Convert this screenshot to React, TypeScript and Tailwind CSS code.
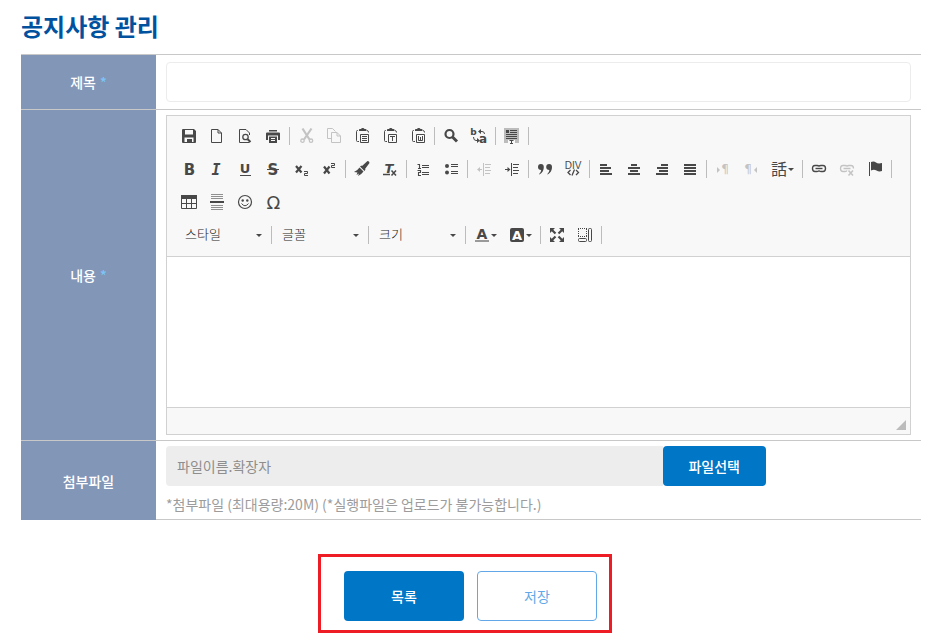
import { ReactNode } from "react";

const DARK = "#484848";
const MUTED = "#c3c3c3";
const SANS = "'DejaVu Sans', 'Noto Sans', sans-serif";

function Icon({ children, muted = false }: { children: ReactNode; muted?: boolean }) {
  const color = muted ? MUTED : DARK;
  return (
    <svg className="size-4 shrink-0 overflow-visible" viewBox="0 0 16 16" fill="none" stroke={color} color={color} aria-hidden="true">
      {children}
    </svg>
  );
}

type LetterProps = { x: number; y: number; size: number; text: string; bold?: boolean; italic?: boolean; family?: string; fill?: string };

function Letter({ x, y, size, text, bold = true, italic = false, family = SANS, fill = "currentColor" }: LetterProps) {
  return (
    <text
      x={x}
      y={y}
      fontSize={size}
      fontWeight={bold ? 700 : 400}
      fontStyle={italic ? "italic" : "normal"}
      fontFamily={family}
      textAnchor="middle"
      fill={fill}
      stroke="none"
    >
      {text}
    </text>
  );
}

function Caret() {
  return (
    <svg className="h-[3px] w-1.5 shrink-0" viewBox="0 0 6 3" aria-hidden="true">
      <path d="M0 0h6L3 3z" fill={DARK} />
    </svg>
  );
}

const clipboard = (
  <>
    <path d="M4 2.500H3.500Q2.500 2.500 2.500 3.500V12.500Q2.500 13.500 3.500 13.500H5M13 2.500Q14.500 2.500 14.500 4.500" />
    <path d="M5 3V1.500Q5 1 6 1H7Q7.500 0 8.500 0H9Q10 0 10.500 1H11.500Q12.500 1 12.500 1.500V3z" fill="currentColor" stroke="none" />
    <path d="M6.500 6.500H14.500V14.500H6.500z" />
  </>
);

const page = <path d="M2.500 1.500H9L12.500 5V14.500H2.500zM9 1.500V5H12.500" />;

const icons: Record<string, ReactNode> = {
  save: (
    <Icon>
      <path d="M2 1H13L15 3V14Q15 15 14 15H2Q1 15 1 14V2Q1 1 2 1zM4 2V6.500H12V2zM3.500 9.500V14H6V11H11V14H12.500V9.500z" fill="currentColor" fillRule="evenodd" stroke="none" />
      <path d="M7 12H8.500V14H7z" fill="currentColor" stroke="none" />
    </Icon>
  ),
  page: <Icon>{page}</Icon>,
  preview: (
    <Icon>
      <path d="M12.500 7V5L9 1.500H2.500V14.500H12.500" />
      <circle cx="8.500" cy="9" r="2.700" strokeWidth="1.300" />
      <path d="M10.700 11.200L13.500 14" strokeWidth="2" />
    </Icon>
  ),
  print: (
    <Icon>
      <path d="M4 2H12V3.500H4zM2 4.500H14Q15 4.500 15 5.500V12H13V7.500H3V12H1V5.500Q1 4.500 2 4.500zM4 8.500H12V15H4z" fill="currentColor" stroke="none" />
      <path d="M6 10.500H10M6 12.500H10" stroke="#f8f8f8" />
    </Icon>
  ),
  cut: (
    <Icon muted>
      <path d="M4.500 .500L11.500 11.500M13.500 .500L6 11.500" strokeWidth="2.200" />
      <circle cx="4.500" cy="12.700" r="1.700" strokeWidth="1.300" />
      <circle cx="13" cy="12.700" r="1.700" strokeWidth="1.300" />
    </Icon>
  ),
  copy: (
    <Icon muted>
      <path d="M5 10.500H1.500V.500H6.500L9.500 3.500" />
      <path d="M5.500 4.500H11L14.500 8V14.500H5.500zM11 4.500V8H14.500" />
    </Icon>
  ),
  paste: (
    <Icon>
      {clipboard}
      <path d="M8 8.500H13M8 10.500H13M8 12.500H13" />
    </Icon>
  ),
  pasteText: (
    <Icon>
      {clipboard}
      <path d="M8 8.500H13M10.500 8V13" />
    </Icon>
  ),
  pasteWord: (
    <Icon>
      {clipboard}
      <path d="M8.500 8V12.500H12.500V8M10.500 9V13" />
    </Icon>
  ),
  find: (
    <Icon>
      <circle cx="6.500" cy="6" r="4" strokeWidth="2.200" />
      <path d="M9.500 9L14 13.500" strokeWidth="3" />
    </Icon>
  ),
  replace: (
    <Icon>
      <Letter x={2.5} y={7} size={9} text="b" />
      <Letter x={12} y={15} size={12} text="a" />
      <path d="M8 3.500H11Q13.500 3.500 13.500 6M2.500 9Q2.500 12.500 5 12.500H8" />
      <path d="M10 1L7 3.500L10 6zM6 10L9 12.500L6 15z" fill="currentColor" stroke="none" />
    </Icon>
  ),
  selectAll: (
    <Icon>
      <path d="M0 0H15V15H0z" fill="#bcbcbc" stroke="none" />
      <path d="M2 2H5V5H2z" fill="currentColor" stroke="none" />
      <path d="M6 2.500H13M6 4.500H13M2 6.500H13M2 8.500H13M2 10.500H13" />
      <path d="M4 12H11V16H4z" fill="#f8f8f8" stroke="none" />
      <path d="M5.500 12.500H9.500M7.500 12V15.500M6 15.500H9" />
    </Icon>
  ),
  bold: (
    <Icon>
      <Letter x={8.5} y={14} size={15} text="B" />
    </Icon>
  ),
  italic: (
    <Icon>
      <Letter x={7} y={14} size={15} text="I" italic family="'DejaVu Sans Mono', monospace" />
    </Icon>
  ),
  underline: (
    <Icon>
      <Letter x={8} y={12} size={13} text="U" />
      <path d="M3 14.500H14" />
    </Icon>
  ),
  strike: (
    <Icon>
      <Letter x={8} y={14} size={15} text="S" />
      <path d="M2 8.500H14" />
    </Icon>
  ),
  sub: (
    <Icon>
      <path d="M3 5L8.500 11.500M8.500 5L3 11.500" strokeWidth="2.200" />
      <path d="M11 10.500H14.500V12.500H11.500V14.500H15" />
    </Icon>
  ),
  sup: (
    <Icon>
      <path d="M3 5.500L8.500 12.500M8.500 5.500L3 12.500" strokeWidth="2.200" />
      <path d="M10 2.500H13.500V4.500H10.500V6.500H14" />
    </Icon>
  ),
  brush: (
    <Icon>
      <path d="M13.500 0Q15.500 0 15.500 2L11 8L8 5zM7.500 4.500L11.500 8.500L10.500 10L6 5.500zM5.500 6.500L9.500 10.500Q7 14 4 15L5 12.500L2.500 14L3.500 11.500L0 11Q4 9 5.500 6.500z" fill="currentColor" stroke="none" />
    </Icon>
  ),
  removeFormat: (
    <Icon>
      <Letter x={7} y={12} size={13} text="T" italic />
      <path d="M1 13.500H8M9.500 9.500L14 14.500M14 9.500L9.500 14.500" strokeWidth="1.500" />
    </Icon>
  ),
  numbered: (
    <Icon>
      <path d="M2.500 3.500H4.500V7M3 7.500H6M2.500 9.500H5.500V11.500H3.500V14.500H6" strokeWidth="1.100" />
      <path d="M7 4.500H14M7 6.500H14M7 11.500H14M7 13.500H14" />
    </Icon>
  ),
  bulleted: (
    <Icon>
      <circle cx="4" cy="5" r="2" fill="currentColor" stroke="none" />
      <circle cx="4" cy="11.500" r="2" fill="currentColor" stroke="none" />
      <path d="M8 3.500H15M8 5.500H15M8 10.500H15M8 12.500H15" />
    </Icon>
  ),
  outdent: (
    <Icon muted>
      <path d="M7.500 2V15M9 3.500H15M9 6.500H14M9 9.500H15M9 12.500H14M2 8.500H6" />
      <path d="M4 6L1 8.500L4 11z" fill="currentColor" stroke="none" />
    </Icon>
  ),
  indent: (
    <Icon>
      <path d="M7.500 2V15M9 3.500H15M9 6.500H14M9 9.500H15M9 12.500H14M1 8.500H5" />
      <path d="M3.500 6L6.500 8.500L3.500 11z" fill="currentColor" stroke="none" />
    </Icon>
  ),
  quote: (
    <Icon>
      <path d="M1 6A2.800 2.800 0 0 1 6.800 6Q7 10.500 2.500 13.500Q1.800 13.500 2.500 12.500Q4 11 4.200 9Q1 9 1 6zM9.200 6A2.800 2.800 0 0 1 15 6Q15.200 10.500 10.700 13.500Q10 13.500 10.700 12.500Q12.200 11 12.400 9Q9.200 9 9.200 6z" fill="currentColor" stroke="none" />
    </Icon>
  ),
  div: (
    <Icon>
      <Letter x={8} y={8} size={10} text="DIV" bold={false} family="'Liberation Sans Narrow', 'Liberation Sans', sans-serif" />
      <path d="M5.500 9L3 11.500L5.500 14M11 9L13.500 11.500L11 14M9.500 8.500L7 14.500" strokeWidth="1.300" />
    </Icon>
  ),
  alignLeft: (
    <Icon>
      <path d="M2 4H9M2 7H13M2 10H11M2 13H14" strokeWidth="2" shapeRendering="crispEdges" />
    </Icon>
  ),
  alignCenter: (
    <Icon>
      <path d="M5 4H11M2 7H14M4 10H12M2 13H14" strokeWidth="2" shapeRendering="crispEdges" />
    </Icon>
  ),
  alignRight: (
    <Icon>
      <path d="M7 4H14M3 7H14M5 10H14M2 13H14" strokeWidth="2" shapeRendering="crispEdges" />
    </Icon>
  ),
  justify: (
    <Icon>
      <path d="M2 4H14M2 7H14M2 10H14M2 13H14" strokeWidth="2" shapeRendering="crispEdges" />
    </Icon>
  ),
  ltr: (
    <Icon muted>
      <path d="M2 6L5 9L2 12z" fill="currentColor" stroke="none" />
      <Letter x={10} y={12} size={12} text="¶" bold={false} />
    </Icon>
  ),
  rtl: (
    <Icon muted>
      <path d="M14 6L11 9L14 12z" fill="currentColor" stroke="none" />
      <Letter x={5} y={12} size={12} text="¶" bold={false} />
    </Icon>
  ),
  language: (
    <Icon>
      <Letter x={8} y={14} size={16} text="話" bold={false} family="'Noto Sans CJK JP', sans-serif" />
    </Icon>
  ),
  link: (
    <Icon>
      <path d="M8 5.500Q7.500 4.500 6 4.500H4Q1.500 4.500 1.500 7.500T4 10.500H6Q7.500 10.500 8 9.500M8 5.500Q8.500 4.500 10 4.500H12Q14.500 4.500 14.500 7.500T12 10.500H10Q8.500 10.500 8 9.500" strokeWidth="1.400" />
      <path d="M4.500 7.500H11.500" strokeWidth="1.400" />
    </Icon>
  ),
  unlink: (
    <Icon muted>
      <path d="M8 5.500Q7.500 4.500 6 4.500H4Q1.500 4.500 1.500 7.500T4 10.500H6Q7.500 10.500 8 9.500M8 5.500Q8.500 4.500 10 4.500H12Q14.500 4.500 14.500 7.500" strokeWidth="1.300" />
      <path d="M4.500 7.500H11.500M9.500 9.500L14 14.500M14 9.500L9.500 14.500" strokeWidth="1.500" />
    </Icon>
  ),
  anchor: (
    <Icon>
      <path d="M2.500 1V15" />
      <path d="M4 1Q7 0 9 1.500T15 2V10Q12 11 9.500 9.500T4 9.500z" fill="currentColor" stroke="none" />
    </Icon>
  ),
  table: (
    <Icon>
      <path d="M0 1H16V5H0z" fill="currentColor" stroke="none" />
      <path d="M.500 4V14.500H15.500V4M5.500 5V14M10.500 5V14M0 9.500H16" />
    </Icon>
  ),
  rule: (
    <Icon>
      <path d="M2 .500H14M2 2.500H14M2 4.500H14M2 11.500H14M2 13.500H14M2 15.500H14" stroke="#909090" />
      <path d="M1 8H15" strokeWidth="2" shapeRendering="crispEdges" />
    </Icon>
  ),
  smiley: (
    <Icon>
      <circle cx="8" cy="8" r="6.500" strokeWidth="1.200" />
      <path d="M4.500 9.500Q8 14 11.500 9.500" />
      <circle cx="5.700" cy="6.500" r="1.200" fill="currentColor" stroke="none" />
      <circle cx="10.300" cy="6.500" r="1.200" fill="currentColor" stroke="none" />
    </Icon>
  ),
  omega: (
    <Icon>
      <Letter x={8.5} y={15} size={18} text="Ω" bold={false} />
    </Icon>
  ),
  textColor: (
    <Icon>
      <Letter x={8} y={12} size={14} text="A" />
      <path d="M1 14H15" stroke="#9a9a9a" strokeWidth="2" shapeRendering="crispEdges" />
    </Icon>
  ),
  bgColor: (
    <Icon>
      <rect x="1" y="1" width="14" height="14" rx="2" fill="currentColor" stroke="none" />
      <Letter x={8} y={13} size={13} text="A" fill="#ffffff" />
    </Icon>
  ),
  maximize: (
    <Icon>
      <path d="M3 3L6.500 6.500M13 3L9.500 6.500M3 13L6.500 9.500M13 13L9.500 9.500" strokeWidth="2.200" />
      <path d="M1 1H6L1 6zM15 1H10L15 6zM1 15H6L1 10zM15 15H10L15 10z" fill="currentColor" stroke="none" />
    </Icon>
  ),
  blocks: (
    <Icon>
      <path d="M1 1.500H10M1.500 2V10M9.500 2V10M1 9.500H10" strokeDasharray="1 1" />
      <rect x="1.500" y="11.500" width="8" height="3" rx="1" />
      <rect x="11.500" y="1.500" width="3" height="13" rx="1" />
    </Icon>
  ),
};

type Tool = { icon: string; label: string; menu?: boolean; off?: boolean };
const t = (icon: string, label: string, extra: Partial<Tool> = {}): Tool => ({ icon, label, ...extra });

const row1: Tool[][] = [
  [t("save", "저장"), t("page", "새 문서"), t("preview", "미리보기"), t("print", "인쇄")],
  [t("cut", "잘라내기", { off: true }), t("copy", "복사", { off: true }), t("paste", "붙여넣기"), t("pasteText", "텍스트로 붙여넣기"), t("pasteWord", "워드에서 붙여넣기")],
  [t("find", "찾기"), t("replace", "바꾸기")],
  [t("selectAll", "모두 선택")],
];
const row2: Tool[][] = [
  [t("bold", "굵게"), t("italic", "기울임꼴"), t("underline", "밑줄"), t("strike", "취소선"), t("sub", "아래 첨자"), t("sup", "위 첨자")],
  [t("brush", "서식 복사"), t("removeFormat", "서식 지우기")],
  [t("numbered", "번호 목록"), t("bulleted", "글머리 목록")],
  [t("outdent", "내어쓰기", { off: true }), t("indent", "들여쓰기")],
  [t("quote", "인용"), t("div", "DIV 컨테이너")],
  [t("alignLeft", "왼쪽 정렬"), t("alignCenter", "가운데 정렬"), t("alignRight", "오른쪽 정렬"), t("justify", "양쪽 맞춤")],
  [t("ltr", "왼쪽에서 오른쪽", { off: true }), t("rtl", "오른쪽에서 왼쪽", { off: true }), t("language", "언어", { menu: true })],
  [t("link", "링크"), t("unlink", "링크 해제", { off: true }), t("anchor", "책갈피")],
];
const row3: Tool[] = [t("table", "표"), t("rule", "가로 줄"), t("smiley", "이모티콘"), t("omega", "특수문자")];
const row4: Tool[][] = [
  [t("textColor", "글자색", { menu: true }), t("bgColor", "배경색", { menu: true })],
  [t("maximize", "최대화"), t("blocks", "블록 보기")],
];

function ToolButton({ tool }: { tool: Tool }) {
  return (
    <button type="button" aria-label={tool.label} disabled={tool.off} className="flex h-7 items-center gap-px px-1.5">
      {icons[tool.icon]}
      {tool.menu && <Caret />}
    </button>
  );
}

function Separator() {
  return <span className="mx-0.5 h-[18px] w-px bg-[#bcbcbc]" />;
}

function Groups({ groups }: { groups: Tool[][] }) {
  return (
    <>
      {groups.map((group, i) => (
        <div key={i} className="flex items-center">
          {group.map((tool) => (
            <ToolButton key={tool.icon} tool={tool} />
          ))}
          <Separator />
        </div>
      ))}
    </>
  );
}

function Combo({ label }: { label: string }) {
  return (
    <div className="flex items-center">
      <div className="relative flex w-[92px] items-center">
        <select
          aria-label={label}
          className="h-7 w-full appearance-none bg-transparent pb-0.5 pl-2 text-[13px] font-light text-[#1c1c1c] outline-none"
        >
          <option>{label}</option>
        </select>
        <span className="pointer-events-none absolute right-[7px] flex">
          <Caret />
        </span>
      </div>
      <Separator />
    </div>
  );
}

function Row({ label, htmlFor, required, children }: { label: string; htmlFor: string; required?: boolean; children: ReactNode }) {
  return (
    <div className="flex border-t border-[#c8c8c8]">
      <label htmlFor={htmlFor} className="flex w-[135px] shrink-0 items-center justify-center gap-1 bg-[#8296b8] text-sm font-medium text-white">
        {label}
        {required && <span className="text-[#7cc4f8]">*</span>}
      </label>
      <div className="min-w-0 flex-1">{children}</div>
    </div>
  );
}

export default function App() {
  return (
    <main className="bg-white px-[21px] pt-2 pb-[7px] font-['Noto_Sans_CJK_KR',sans-serif]">
      <h1 className="text-2xl leading-9 font-bold text-[#00529f]">공지사항 관리</h1>

      <form className="mt-2.5">
        <Row label="제목" htmlFor="title" required>
          <div className="px-2.5 py-[7px]">
            <input id="title" type="text" className="block h-10 w-full rounded border border-[#ececec] px-2.5 text-sm outline-none" />
          </div>
        </Row>

        <Row label="내용" htmlFor="body" required>
          <div className="px-2.5 py-[5px]">
            <div className="border border-[#d1d1d1]">
              <div className="flex flex-col gap-px border-b border-[#d1d1d1] bg-[#f8f8f8] px-2 pt-1 pb-[5px]">
                <div className="flex h-8 items-center">
                  <Groups groups={row1} />
                </div>
                <div className="flex h-8 items-center">
                  <Groups groups={row2} />
                </div>
                <div className="flex h-8 items-center">
                  {row3.map((tool) => (
                    <ToolButton key={tool.icon} tool={tool} />
                  ))}
                </div>
                <div className="flex h-8 items-center pl-0.5">
                  <Combo label="스타일" />
                  <Combo label="글꼴" />
                  <Combo label="크기" />
                  <Groups groups={row4} />
                </div>
              </div>
              <textarea id="body" className="block h-[150px] w-full resize-none bg-white p-5 text-sm outline-none" />
              <div className="flex h-[27px] items-end justify-end border-t border-[#d1d1d1] bg-[#f8f8f8] p-1">
                <svg className="size-2.5" viewBox="0 0 10 10" aria-hidden="true">
                  <path d="M10 0V10H0z" fill="#bcbcbc" />
                </svg>
              </div>
            </div>
          </div>
        </Row>

        <Row label="첨부파일" htmlFor="file">
          <div className="border-b border-[#c8c8c8] px-2.5 py-[5px]">
            <div className="flex">
              <input
                id="file"
                type="text"
                readOnly
                placeholder="파일이름.확장자"
                className="h-10 w-2/3 max-w-[497px] rounded-l bg-[#ededed] px-[11px] text-sm outline-none placeholder:text-[#8e8e8e]"
              />
              <button type="button" className="h-10 w-[103px] shrink-0 rounded bg-[#0076c6] text-sm font-medium text-white">
                파일선택
              </button>
            </div>
            <p className="pt-2 text-sm leading-5 text-[#9c9c9c]">*첨부파일 (최대용량:20M) (*실행파일은 업로드가 불가능합니다.)</p>
          </div>
        </Row>

        <div className="mt-[34px] flex justify-center pr-3">
          <div className="flex gap-[13px] border-3 border-[#ee1c25] pt-3.5 pr-3 pb-[9px] pl-[23px]">
            <button type="button" className="h-[50px] w-[120px] rounded bg-[#0076c6] text-sm font-medium text-white">
              목록
            </button>
            <button type="submit" className="h-[50px] w-[120px] rounded border border-[#62a8e8] bg-white text-sm text-[#62a8e8]">
              저장
            </button>
          </div>
        </div>
      </form>
    </main>
  );
}
